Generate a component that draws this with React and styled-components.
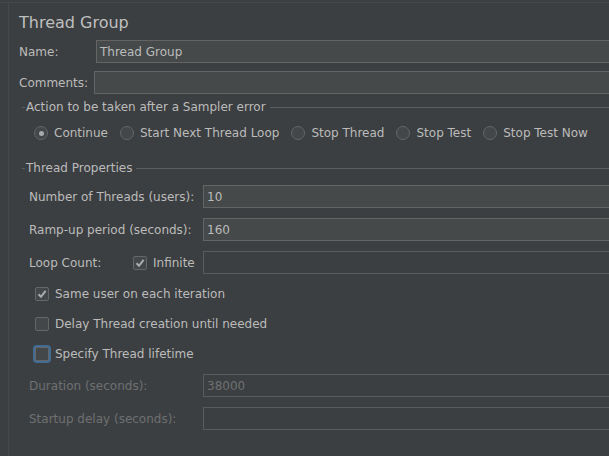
import React from 'react';
import styled, { createGlobalStyle } from 'styled-components';

const GlobalStyle = createGlobalStyle`
  html, body {
    margin: 0;
    padding: 0;
    background: #3c3f41;
    overflow: hidden;
  }
  body {
    font-family: "DejaVu Sans", "Liberation Sans", sans-serif;
    font-size: 12px;
    color: #bbbbbb;
  }
`;

const Frame = styled.div`
  width: 100%;
  height: 456px;
  display: flex;
  flex-direction: column;
  overflow: hidden;
`;

const TopStrip = styled.div`
  height: 2px;
  border-bottom: 1px solid #46494b;
  flex: none;
`;

const Body = styled.div`
  display: flex;
  flex: 1;
  min-width: 0;
`;

const Gutter = styled.div`
  width: 8px;
  border-right: 1px solid #46494b;
  flex: none;
`;

const Panel = styled.div`
  flex: 1;
  min-width: 0;
  padding-left: 10px;
  display: flex;
  flex-direction: column;
`;

const Title = styled.div`
  font-size: 16px;
  line-height: 19px;
  margin-top: 10px;
  color: #bfbfbf;
`;

const FieldRow = styled.div`
  display: flex;
  align-items: center;
  height: 23px;
  margin-top: ${p => p.$top || 0}px;
`;

const Label = styled.span`
  width: ${p => p.$width}px;
  flex: none;
  white-space: nowrap;
  color: ${p => (p.$disabled ? '#6e7072' : '#bbbbbb')};
`;

const Input = styled.div`
  flex: 1;
  min-width: 0;
  height: 23px;
  box-sizing: border-box;
  border: 1px solid ${p => (p.$disabled ? '#595c5e' : '#646464')};
  border-right: none;
  background: ${p => (p.$disabled ? '#3c3f41' : '#45494a')};
  color: ${p => (p.$disabled ? '#6e7072' : '#bbbbbb')};
  padding-left: 3px;
  display: flex;
  align-items: center;
  white-space: nowrap;
`;

const Legend = styled.div`
  display: flex;
  align-items: center;
  height: 14px;
  margin-top: ${p => p.$top}px;
  margin-left: 3px;
  white-space: nowrap;
  &::before {
    content: '';
    width: 3px;
    height: 1px;
    background: #5b5e60;
    margin-right: 1px;
  }
  &::after {
    content: '';
    flex: 1;
    height: 1px;
    background: #5b5e60;
    margin-left: 4px;
  }
`;

const RadioRow = styled.div`
  display: flex;
  align-items: center;
  height: 18px;
  margin-top: 10px;
  padding-left: 15px;
`;

const RadioItem = styled.label`
  display: flex;
  align-items: center;
  gap: 6px;
  margin-right: 12px;
  white-space: nowrap;
`;

const Circle = styled.span`
  width: 14px;
  height: 14px;
  box-sizing: border-box;
  border-radius: 50%;
  border: 1px solid #646667;
  background: #43474a;
  display: flex;
  align-items: center;
  justify-content: center;
  &::after {
    content: '';
    display: ${p => (p.$checked ? 'block' : 'none')};
    width: 5px;
    height: 5px;
    border-radius: 50%;
    background: #a9a9a9;
  }
`;

const Props = styled.div`
  display: flex;
  flex-direction: column;
  gap: 10px;
  margin-top: 10px;
  padding-left: 10px;
`;

const CheckRow = styled.label`
  display: flex;
  align-items: center;
  height: 20px;
  gap: 6px;
  padding-left: 6px;
  white-space: nowrap;
`;

const Box = styled.span`
  width: 14px;
  height: 14px;
  box-sizing: border-box;
  border: 1px solid #646667;
  border-radius: 2px;
  background: #43474a;
  display: flex;
  align-items: center;
  justify-content: center;
  flex: none;
  box-shadow: ${p => (p.$focused ? '0 0 0 2px #436c95' : 'none')};
`;

const InlineCheck = styled.label`
  display: flex;
  align-items: center;
  gap: 6px;
  width: 70px;
  flex: none;
`;

const Check = () => (
  <svg width="10" height="10" viewBox="0 0 10 10">
    <polyline points="1.5,5.2 4,7.8 8.6,1.8" fill="none" stroke="#acacac" strokeWidth="2" />
  </svg>
);

const radios = ['Continue', 'Start Next Thread Loop', 'Stop Thread', 'Stop Test', 'Stop Test Now'];

export default function App() {
  return (
    <>
      <GlobalStyle />
      <Frame>
        <TopStrip />
        <Body>
          <Gutter />
          <Panel>
            <Title>Thread Group</Title>
            <FieldRow $top={8}>
              <Label $width={77}>Name:</Label>
              <Input>Thread Group</Input>
            </FieldRow>
            <FieldRow $top={8}>
              <Label $width={75}>Comments:</Label>
              <Input />
            </FieldRow>

            <Legend $top={6}>Action to be taken after a Sampler error</Legend>
            <RadioRow>
              {radios.map((r, i) => (
                <RadioItem key={r}>
                  <Circle $checked={i === 0} />
                  {r}
                </RadioItem>
              ))}
            </RadioRow>

            <Legend $top={19}>Thread Properties</Legend>
            <Props>
              <FieldRow>
                <Label $width={174}>Number of Threads (users):</Label>
                <Input>10</Input>
              </FieldRow>
              <FieldRow>
                <Label $width={174}>Ramp-up period (seconds):</Label>
                <Input>160</Input>
              </FieldRow>
              <FieldRow>
                <Label $width={104}>Loop Count:</Label>
                <InlineCheck>
                  <Box><Check /></Box>
                  Infinite
                </InlineCheck>
                <Input $disabled />
              </FieldRow>
              <CheckRow>
                <Box><Check /></Box>
                Same user on each iteration
              </CheckRow>
              <CheckRow>
                <Box />
                Delay Thread creation until needed
              </CheckRow>
              <CheckRow>
                <Box $focused />
                Specify Thread lifetime
              </CheckRow>
              <FieldRow>
                <Label $width={174} $disabled>Duration (seconds):</Label>
                <Input $disabled>38000</Input>
              </FieldRow>
              <FieldRow>
                <Label $width={174} $disabled>Startup delay (seconds):</Label>
                <Input $disabled />
              </FieldRow>
            </Props>
          </Panel>
        </Body>
      </Frame>
    </>
  );
}
